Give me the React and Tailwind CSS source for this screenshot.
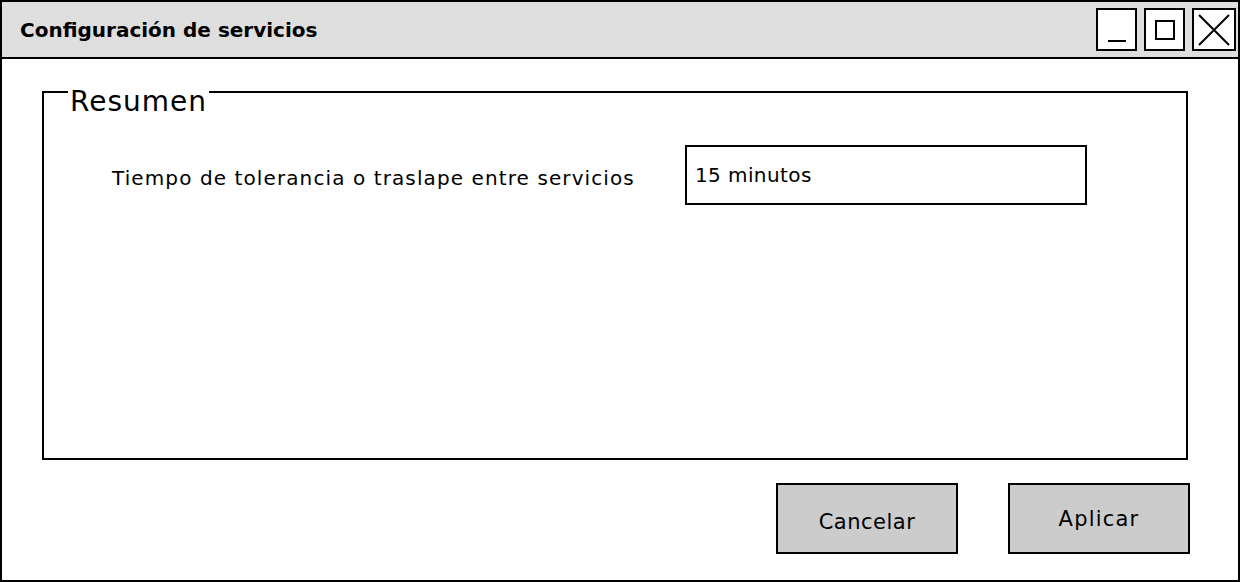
export default function App() {
  const font = { fontFamily: '"DejaVu Sans", "Liberation Sans", sans-serif' };
  return (
    <div className="w-[1240px] h-[582px] bg-white" style={font}>
      <div className="w-[1240px] h-[582px] border-2 border-black flex flex-col">
        <div className="h-[57px] bg-[#dedede] border-b-2 border-black flex items-center justify-between pl-[18px] pr-[2px]">
          <span className="text-[20px] font-bold text-black pt-[1px]">Configuración de servicios</span>
          <div className="flex items-center gap-[7px] h-full">
            <div className="w-[41px] h-[43px] border-2 border-black bg-white flex items-end justify-center pb-[7px]">
              <div className="w-[18px] h-[2px] bg-black" />
            </div>
            <div className="w-[41px] h-[43px] border-2 border-black bg-white flex items-center justify-center">
              <div className="w-[20px] h-[20px] border-2 border-black" />
            </div>
            <div className="w-[44px] h-[43px] border-2 border-black bg-white flex items-center justify-center">
              <svg width="36" height="36" viewBox="0 0 36 36">
                <path d="M3 3 L33 33 M33 3 L3 33" stroke="black" strokeWidth="2" fill="none" />
              </svg>
            </div>
          </div>
        </div>
        <div className="flex-1 flex flex-col pl-[40px] pr-[50px] pt-[32px]">
          <div className="relative h-[369px] border-2 border-black">
            <span className="absolute left-[24px] top-[-9px] bg-white px-[2px] text-[28px] leading-[36px] tracking-[1px] text-black">Resumen</span>
            <div className="flex items-center pt-[52px] pl-[68px]">
              <span className="w-[573px] text-[20px] tracking-[1.1px] text-black pt-[6px]">Tiempo de tolerancia o traslape entre servicios</span>
              <div className="w-[402px] h-[60px] border-2 border-black flex items-center pl-[8px] text-[20px] tracking-[0.4px] text-black">15 minutos</div>
            </div>
          </div>
          <div className="flex justify-end gap-[50px] mt-[23px] mr-[-2px]">
            <button className="w-[182px] h-[71px] border-2 border-black bg-[#cccccc] text-[21px] tracking-[0.5px] text-black pt-[8px]">Cancelar</button>
            <button className="w-[182px] h-[71px] border-2 border-black bg-[#cccccc] text-[21px] tracking-[1.2px] text-black pt-[3px]">Aplicar</button>
          </div>
        </div>
      </div>
    </div>
  );
}
